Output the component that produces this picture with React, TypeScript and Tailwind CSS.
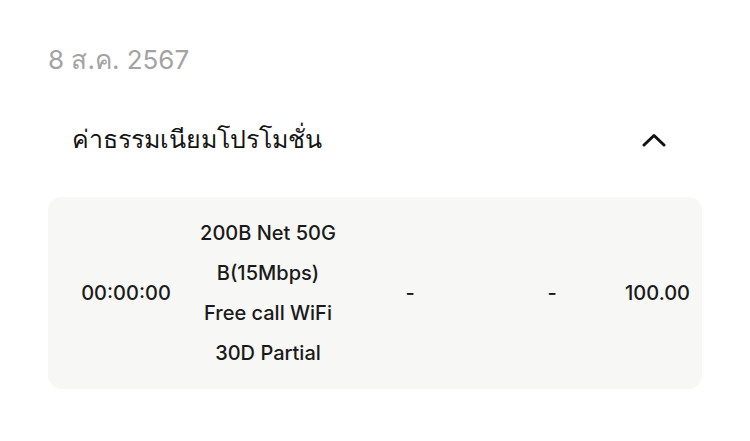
import React from 'react';

const rows = [
  {
    time: '00:00:00',
    name: ['200B Net 50G', 'B(15Mbps)', 'Free call WiFi', '30D Partial'],
    a: '-',
    b: '-',
    amount: '100.00',
  },
];

export default function App() {
  return (
    <div className="w-[750px] h-[441px] bg-white font-['Inter','Noto_Sans','Liberation_Sans',sans-serif] text-[#1a1a1a]">
      <div className="pl-[48px] pt-[42px] text-[26px] leading-[36px] text-[#a3a3a3]">8 ส.ค. 2567</div>

      {/* Section header */}
      <div className="flex items-center justify-between pl-[72px] pr-[84px] mt-[39px] h-[46px]">
        <span className="text-[25px] text-[#141414]">ค่าธรรมเนียมโปรโมชั่น</span>
        <svg width="24" height="14" viewBox="0 0 24 14" fill="none">
          <path d="M2 12L12 2.5L22 12" stroke="#111" strokeWidth="3" strokeLinecap="round" strokeLinejoin="round" />
        </svg>
      </div>

      <div className="mx-[48px] mt-[34px] rounded-[14px] bg-[#f7f7f5]">
        {rows.map((r, i) => (
          <div key={i} className="flex items-center py-[16px] pl-[7px] pr-[12px] text-[20px] font-medium">
            <div className="w-[142px] text-center">{r.time}</div>
            <div className="w-[142px] text-center">
              {r.name.map(l => (
                <div key={l} className="leading-[40px]">{l}</div>
              ))}
            </div>
            <div className="w-[142px] text-center">{r.a}</div>
            <div className="w-[142px] text-center">{r.b}</div>
            <div className="flex-1 text-right">{r.amount}</div>
          </div>
        ))}
      </div>
    </div>
  );
}
